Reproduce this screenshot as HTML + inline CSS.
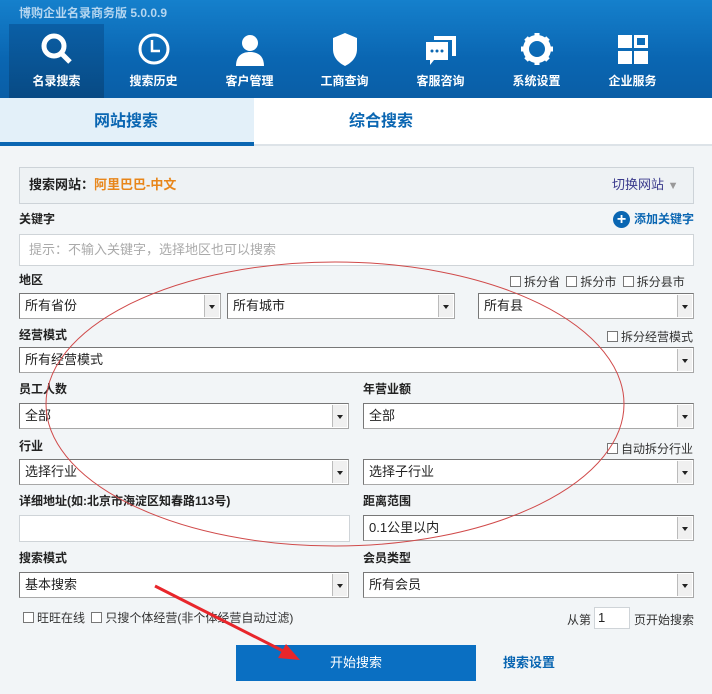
<!DOCTYPE html><html><head><meta charset="utf-8"><style>
*{box-sizing:border-box;margin:0;padding:0}
body{width:712px;height:694px;background:#f2f5f7;font-family:"Liberation Sans","Noto Sans CJK SC",sans-serif;font-size:13px;color:#222;position:relative;overflow:hidden}
.a{position:absolute}
.hdr{left:0;top:0;width:712px;height:98px;background:linear-gradient(#1580cc,#0a66b2 60%,#0a5ea6)}
.nav{top:24px;width:95px;height:74px;color:#fff;text-align:center;font-size:12px;font-weight:bold}
.nav svg{display:block;margin:8px auto 6px;height:34px}
.lbl{font-size:12px;font-weight:bold;color:#222;line-height:14px}
.sel{background:#fff;border:1px solid #a8a8a8;border-top-color:#777;border-left-color:#777;height:26px;font-size:13px;line-height:23px;padding:0 5px}
.sel i{position:absolute;right:1px;top:1px;bottom:1px;width:15px;background:#f0f0f0;border-left:1px solid #bbb}
.sel i:after{content:"";position:absolute;left:4px;top:10px;border:3px solid transparent;border-top:4px solid #222}
.cb{display:inline-block;width:11px;height:11px;border:1px solid #777;background:#fff;vertical-align:-1px;margin-right:3px}
.chk{font-size:12px;color:#333;line-height:14px}
</style></head><body>
<div class="a hdr"></div>
<div class="a" style="left:19px;top:4px;color:#b5d6f0;font-size:12px;font-weight:bold">博购企业名录商务版 5.0.0.9</div>
<div class="a" style="left:9px;top:24px;width:95px;height:74px;background:linear-gradient(#0a5fa6,#084a84)"></div>
<div class="a nav" style="left:9px"><svg viewBox="0 0 34 34" width="34"><circle cx="14" cy="14" r="10" fill="none" stroke="#fff" stroke-width="5"/><path d="M21 21l9 9" stroke="#fff" stroke-width="5"/></svg>名录搜索</div>
<div class="a nav" style="left:106px"><svg viewBox="0 0 34 34" width="34"><circle cx="17" cy="17" r="14" fill="none" stroke="#fff" stroke-width="3"/><path d="M15 8v11h8" fill="none" stroke="#fff" stroke-width="2.5"/></svg>搜索历史</div>
<div class="a nav" style="left:202px"><svg viewBox="0 0 34 34" width="34"><circle cx="17" cy="11" r="8" fill="#fff"/><path d="M3 34c0-10 6-14 14-14s14 4 14 14z" fill="#fff"/></svg>客户管理</div>
<div class="a nav" style="left:297px"><svg viewBox="0 0 34 34" width="34"><path d="M17 1l12 5v11c0 9-6 14-12 17C11 31 5 26 5 17V6z" fill="#fff"/></svg>工商查询</div>
<div class="a nav" style="left:393px"><svg viewBox="0 0 34 34" width="34"><path d="M10 4h22v20h-4V8H10z" fill="#fff"/><path d="M2 10h22v18H10l-4 5v-5H2z" fill="#fff"/><circle cx="8" cy="19" r="1.5" fill="#0a66b2"/><circle cx="13" cy="19" r="1.5" fill="#0a66b2"/><circle cx="18" cy="19" r="1.5" fill="#0a66b2"/></svg>客服咨询</div>
<div class="a nav" style="left:489px"><svg viewBox="0 0 34 34" width="34"><circle cx="17" cy="17" r="11" fill="none" stroke="#fff" stroke-width="6"/><path d="M17 1v6M17 27v6M1 17h6M27 17h6M6 6l4 4M24 24l4 4M6 28l4-4M24 10l4-4" stroke="#fff" stroke-width="5"/></svg>系统设置</div>
<div class="a nav" style="left:585px"><svg viewBox="0 0 34 34" width="34"><rect x="2" y="3" width="14" height="13" fill="#fff"/><rect x="19.5" y="4.5" width="11" height="10" fill="none" stroke="#fff" stroke-width="3"/><rect x="2" y="19" width="14" height="13" fill="#fff"/><rect x="18" y="19" width="14" height="13" fill="#fff"/></svg>企业服务</div>
<div class="a" style="left:0;top:98px;width:712px;height:48px;background:#fff;border-bottom:2px solid #dde3e8"></div>
<div class="a" style="left:0;top:98px;width:254px;height:48px;background:#e3f0f9;border-bottom:4px solid #0a66b2"></div>
<div class="a" style="left:94px;top:112px;font-size:16px;font-weight:bold;color:#0a66b2;line-height:20px">网站搜索</div>
<div class="a" style="left:349px;top:112px;font-size:16px;font-weight:bold;color:#0a66b2;line-height:20px">综合搜索</div>
<div class="a" style="left:19px;top:167px;width:675px;height:37px;background:#eef2f4;border:1px solid #cdd3d8"></div>
<div class="a" style="left:29px;top:177px;font-weight:bold;font-size:13px;line-height:16px">搜索网站：<span style="color:#e8861a">阿里巴巴-中文</span></div>
<div class="a" style="left:612px;top:177px;color:#3a3a8c;font-size:13px;line-height:16px">切换网站 <span style="color:#999;font-size:11px">▼</span></div>
<div class="a lbl" style="left:19px;top:212px">关键字</div>
<div class="a" style="left:613px;top:211px;width:17px;height:17px;border-radius:50%;background:#0a66b2;color:#fff;font-weight:bold;text-align:center;line-height:17px;font-size:16px">+</div>
<div class="a" style="left:634px;top:212px;color:#0a66b2;font-size:12px;font-weight:bold;line-height:14px">添加关键字</div>
<div class="a" style="left:19px;top:234px;width:675px;height:32px;background:#fff;border:1px solid #cfd4d8;color:#aaa;padding:0 9px;line-height:30px;font-size:13px">提示：不输入关键字，选择地区也可以搜索</div>
<div class="a lbl" style="left:19px;top:273px">地区</div>
<div class="a chk" style="left:510px;top:275px"><span class="cb"></span>拆分省 <span class="cb" style="margin-left:3px"></span>拆分市 <span class="cb" style="margin-left:3px"></span>拆分县市</div>
<div class="a sel" style="left:19px;top:293px;width:202px">所有省份<i></i></div>
<div class="a sel" style="left:227px;top:293px;width:228px">所有城市<i></i></div>
<div class="a sel" style="left:478px;top:293px;width:216px">所有县<i></i></div>
<div class="a lbl" style="left:19px;top:328px">经营模式</div>
<div class="a chk" style="left:607px;top:330px"><span class="cb"></span>拆分经营模式</div>
<div class="a sel" style="left:19px;top:347px;width:675px">所有经营模式<i></i></div>
<div class="a lbl" style="left:19px;top:382px">员工人数</div>
<div class="a lbl" style="left:363px;top:382px">年营业额</div>
<div class="a sel" style="left:19px;top:403px;width:330px">全部<i></i></div>
<div class="a sel" style="left:363px;top:403px;width:331px">全部<i></i></div>
<div class="a lbl" style="left:19px;top:439px">行业</div>
<div class="a chk" style="left:607px;top:442px"><span class="cb"></span>自动拆分行业</div>
<div class="a sel" style="left:19px;top:459px;width:330px">选择行业<i></i></div>
<div class="a sel" style="left:363px;top:459px;width:331px">选择子行业<i></i></div>
<div class="a lbl" style="left:19px;top:494px">详细地址(如:北京市海淀区知春路113号)</div>
<div class="a lbl" style="left:363px;top:494px">距离范围</div>
<div class="a" style="left:19px;top:515px;width:331px;height:27px;background:#fff;border:1px solid #cfd4d8"></div>
<div class="a sel" style="left:363px;top:515px;width:331px">0.1公里以内<i></i></div>
<div class="a lbl" style="left:19px;top:551px">搜索模式</div>
<div class="a lbl" style="left:363px;top:551px">会员类型</div>
<div class="a sel" style="left:19px;top:572px;width:330px">基本搜索<i></i></div>
<div class="a sel" style="left:363px;top:572px;width:331px">所有会员<i></i></div>
<div class="a chk" style="left:23px;top:611px"><span class="cb"></span>旺旺在线 <span class="cb" style="margin-left:3px"></span>只搜个体经营(非个体经营自动过滤)</div>
<div class="a chk" style="left:567px;top:613px">从第</div>
<div class="a" style="left:594px;top:607px;width:36px;height:22px;background:#fff;border:1px solid #cfd4d8;font-size:13px;line-height:20px;padding:0 3px">1</div>
<div class="a chk" style="left:634px;top:613px">页开始搜索</div>
<div class="a" style="left:236px;top:645px;width:240px;height:36px;background:#0a6fc2;color:#fff;text-align:center;line-height:36px;font-size:13px">开始搜索</div>
<div class="a" style="left:503px;top:655px;color:#0a66b2;font-weight:bold;font-size:13px;line-height:16px">搜索设置</div>
<svg class="a" style="left:0;top:0" width="712" height="694"><ellipse cx="335" cy="404" rx="289" ry="142" fill="none" stroke="#d04a4a" stroke-width="1"/><path d="M155 586L287 653" stroke="#e8262b" stroke-width="3"/><path d="M300 660l-22-2 8-14z" fill="#e8262b"/></svg>
</body></html>
